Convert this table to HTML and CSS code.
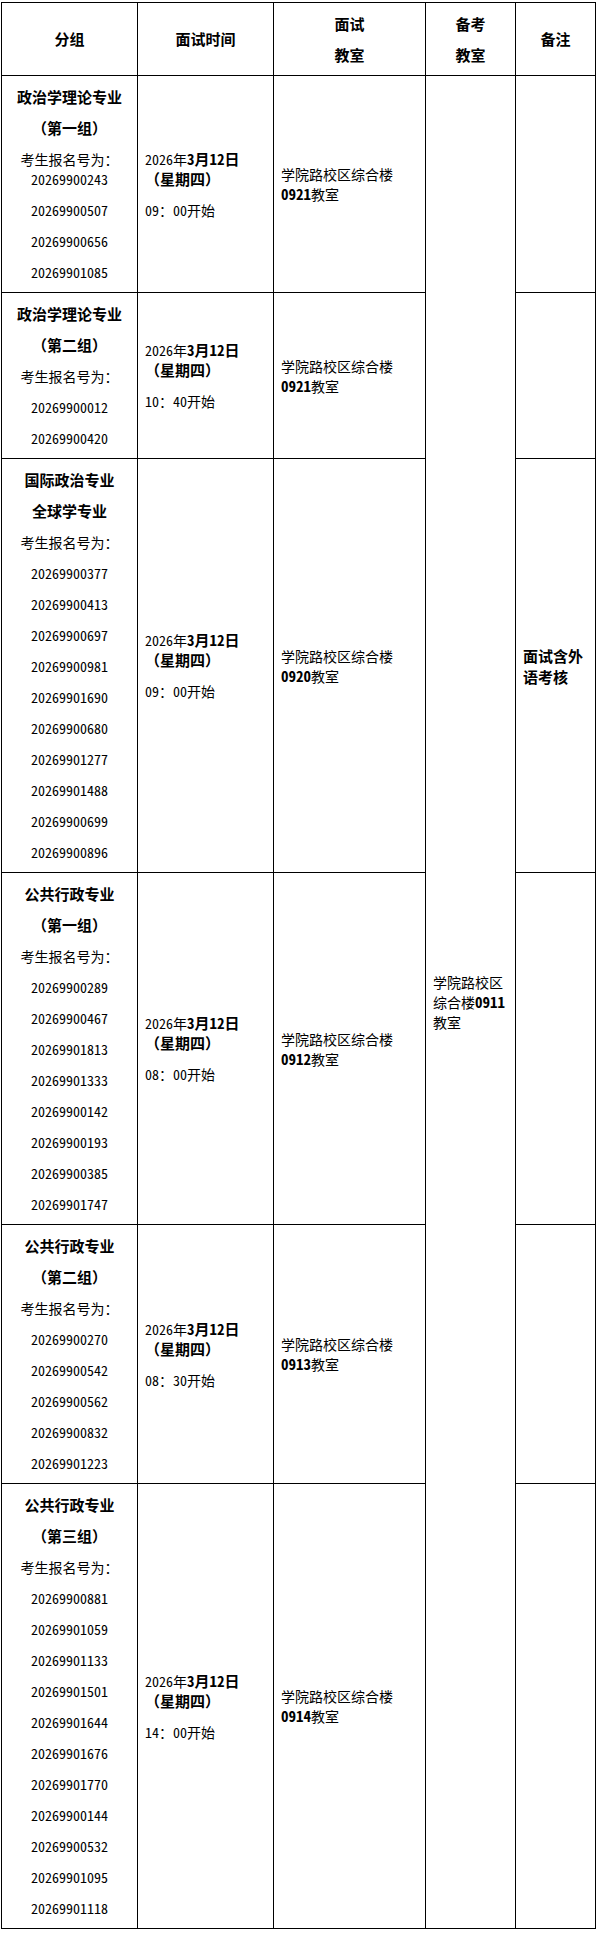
FILE: index.html
```html
<!DOCTYPE html>
<html lang="zh-CN">
<head>
<meta charset="utf-8">
<title>面试安排</title>
<link rel="stylesheet" href="styles.css">
</head>
<body>
<table class="sched">
  <colgroup>
    <col class="c1"><col class="c2"><col class="c3"><col class="c4"><col class="c5">
  </colgroup>
  <thead>
    <tr>
      <th><p>分组</p></th>
      <th><p>面试时间</p></th>
      <th><p>面试</p><p>教室</p></th>
      <th><p>备考</p><p>教室</p></th>
      <th><p>备注</p></th>
    </tr>
  </thead>
  <tbody>
    <tr>
      <td class="grp">
        <p class="b">政治学理论专业</p>
        <p class="b">（第一组）</p>
        <p>考生报名号为：<br>20269900243</p>
        <p>20269900507</p>
        <p>20269900656</p>
        <p>20269901085</p>
      </td>
      <td class="txt"><p>2026年<b>3月12日</b><br><b class="wk">（星期四）</b></p><p>09：00开始</p></td>
      <td class="txt"><p>学院路校区综合楼<br><b>0921</b>教室</p></td>
      <td class="txt" rowspan="6"><p>学院路校区<br>综合楼<b>0911</b><br>教室</p></td>
      <td class="note"></td>
    </tr>
    <tr>
      <td class="grp">
        <p class="b">政治学理论专业</p>
        <p class="b">（第二组）</p>
        <p>考生报名号为：</p>
        <p>20269900012</p>
        <p>20269900420</p>
      </td>
      <td class="txt"><p>2026年<b>3月12日</b><br><b class="wk">（星期四）</b></p><p>10：40开始</p></td>
      <td class="txt"><p>学院路校区综合楼<br><b>0921</b>教室</p></td>
      <td class="note"></td>
    </tr>
    <tr>
      <td class="grp">
        <p class="b">国际政治专业</p>
        <p class="b">全球学专业</p>
        <p>考生报名号为：</p>
        <p>20269900377</p>
        <p>20269900413</p>
        <p>20269900697</p>
        <p>20269900981</p>
        <p>20269901690</p>
        <p>20269900680</p>
        <p>20269901277</p>
        <p>20269901488</p>
        <p>20269900699</p>
        <p>20269900896</p>
      </td>
      <td class="txt"><p>2026年<b>3月12日</b><br><b class="wk">（星期四）</b></p><p>09：00开始</p></td>
      <td class="txt"><p>学院路校区综合楼<br><b>0920</b>教室</p></td>
      <td class="note"><p class="b">面试含外语考核</p></td>
    </tr>
    <tr>
      <td class="grp">
        <p class="b">公共行政专业</p>
        <p class="b">（第一组）</p>
        <p>考生报名号为：</p>
        <p>20269900289</p>
        <p>20269900467</p>
        <p>20269901813</p>
        <p>20269901333</p>
        <p>20269900142</p>
        <p>20269900193</p>
        <p>20269900385</p>
        <p>20269901747</p>
      </td>
      <td class="txt"><p>2026年<b>3月12日</b><br><b class="wk">（星期四）</b></p><p>08：00开始</p></td>
      <td class="txt"><p>学院路校区综合楼<br><b>0912</b>教室</p></td>
      <td class="note"></td>
    </tr>
    <tr>
      <td class="grp">
        <p class="b">公共行政专业</p>
        <p class="b">（第二组）</p>
        <p>考生报名号为：</p>
        <p>20269900270</p>
        <p>20269900542</p>
        <p>20269900562</p>
        <p>20269900832</p>
        <p>20269901223</p>
      </td>
      <td class="txt"><p>2026年<b>3月12日</b><br><b class="wk">（星期四）</b></p><p>08：30开始</p></td>
      <td class="txt"><p>学院路校区综合楼<br><b>0913</b>教室</p></td>
      <td class="note"></td>
    </tr>
    <tr>
      <td class="grp">
        <p class="b">公共行政专业</p>
        <p class="b">（第三组）</p>
        <p>考生报名号为：</p>
        <p>20269900881</p>
        <p>20269901059</p>
        <p>20269901133</p>
        <p>20269901501</p>
        <p>20269901644</p>
        <p>20269901676</p>
        <p>20269901770</p>
        <p>20269900144</p>
        <p>20269900532</p>
        <p>20269901095</p>
        <p>20269901118</p>
      </td>
      <td class="txt"><p>2026年<b>3月12日</b><br><b class="wk">（星期四）</b></p><p>14：00开始</p></td>
      <td class="txt"><p>学院路校区综合楼<br><b>0914</b>教室</p></td>
      <td class="note"></td>
    </tr>
  </tbody>
</table>
</body>
</html>
```

FILE: styles.css
```css
html, body {
  margin: 0;
  padding: 0;
  background: #fff;
}
body {
  font-family: "Noto Sans CJK SC", "Noto Sans", sans-serif;
  font-size: 14px;
  color: #000;
  font-feature-settings: "hwid";
}
.sched {
  border-collapse: collapse;
  table-layout: fixed;
  width: 595px;
  margin: 2px 0 0 1px;
}
.c1 { width: 136px; }
.c2 { width: 136px; }
.c3 { width: 152px; }
.c4 { width: 90px; }
.c5 { width: 80px; }
.sched th,
.sched td {
  border: 1px solid #000;
  padding: 10.5px 7px;
  vertical-align: middle;
  text-align: left;
  font-weight: 400;
}
.sched th {
  text-align: center;
  font-weight: 700;
  font-size: 15px;
  font-feature-settings: normal;
}
.sched p {
  margin: 0;
  line-height: 20px;
}
.sched p + p {
  margin-top: 11px;
}
.sched b,
.sched .b {
  font-weight: 700;
  font-size: 15px;
}
.sched .b,
.sched .wk {
  font-feature-settings: normal;
}
.grp {
  text-align: center !important;
}
.note p {
  line-height: 21px;
}
```
